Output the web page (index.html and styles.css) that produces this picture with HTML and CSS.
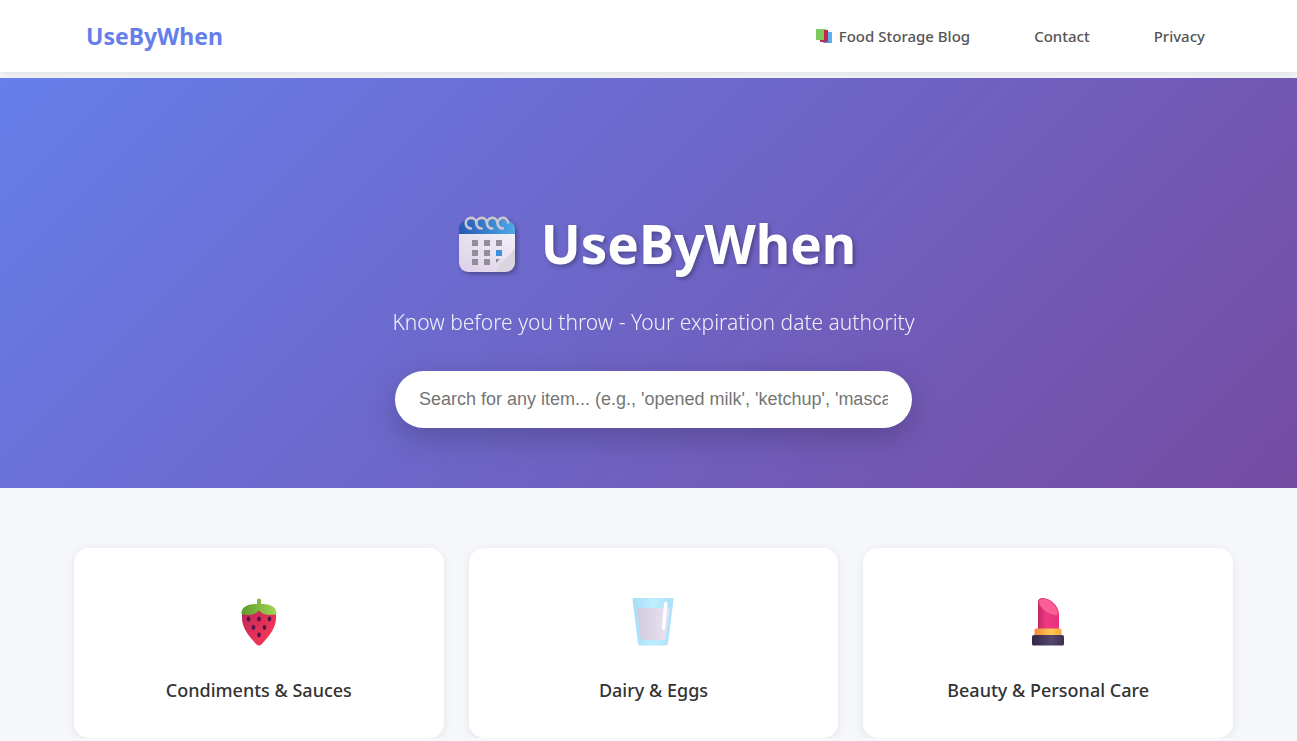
FILE: index.html
```html
<!DOCTYPE html>
<html lang="en">
<head>
    <meta charset="UTF-8">
    <meta name="viewport" content="width=device-width, initial-scale=1.0">
    <title>UseByWhen</title>
    <link rel="stylesheet" href="styles.css">
</head>
<body>
    <header class="header">
        <nav class="nav">
            <a href="#" class="logo">UseByWhen</a>
            <ul class="nav-links">
                <li>
                    <a href="#">
                        <svg class="books-icon" viewBox="0 0 18 16" aria-hidden="true">
                            <rect x="8" y="4" width="9" height="11" rx="1" fill="#4a9be0"/>
                            <rect x="5" y="11" width="7" height="3" fill="#a83464"/>
                            <rect x="1" y="1" width="10" height="11" rx="1" fill="#7cc95c"/>
                            <rect x="9" y="2" width="4" height="11" fill="#c4264e"/>
                            <rect x="13" y="4" width="4" height="10" fill="#5cb1ee"/>
                        </svg>
                        Food Storage Blog
                    </a>
                </li>
                <li><a href="#">Contact</a></li>
                <li><a href="#">Privacy</a></li>
            </ul>
        </nav>
    </header>

    <section class="hero">
        <div class="hero-content">
            <h1>
                <svg class="calendar-icon" viewBox="0 0 56 56" aria-hidden="true">
                    <defs>
                        <linearGradient id="calTop" x1="0" x2="1">
                            <stop offset="0" stop-color="#2558b5"/>
                            <stop offset="1" stop-color="#4fa9e6"/>
                        </linearGradient>
                        <linearGradient id="calPage" x1="0" x2="1" y1="1" y2="0">
                            <stop offset="0" stop-color="#dcd0e6"/>
                            <stop offset="1" stop-color="#f2eff8"/>
                        </linearGradient>
                        <linearGradient id="calFold" x1="0" x2="1" y1="0" y2="1">
                            <stop offset="0" stop-color="#f4f2f8"/>
                            <stop offset="1" stop-color="#bdb8c6"/>
                        </linearGradient>
                    </defs>
                    <path d="M0 18h56v22L40 56H9a9 9 0 0 1-9-9z" fill="url(#calPage)"/>
                    <path d="M37 56l2-6 17-17v14a9 9 0 0 1-9 9z" fill="#d9d5e0"/>
                    <path d="M37 56c2-2 3-5 3-9 6 0 12-5 16-14v4L38 56z" fill="url(#calFold)"/>
                    <path d="M0 18v-5a9 9 0 0 1 9-9h38a9 9 0 0 1 9 9v5z" fill="url(#calTop)"/>
                    <g fill="#918e98">
                        <path d="M13 24h6v6h-6zM25 24h6v6h-6zM37 24h6v6h-6z"/>
                        <path d="M13 34h6v6h-6zM25 34h6v6h-6z"/>
                        <path d="M13 43h6v6h-6zM25 43h6v6h-6zM37 43h4l-4 4z"/>
                    </g>
                    <path d="M37 34h6v6h-6z" fill="#3d8fdc"/>
                    <g fill="none" stroke="#c9c7d2" stroke-width="2.6" stroke-linecap="round">
                        <path d="M12 12.500A5.300 5.300 0 1 1 17.300 6.500"/>
                        <path d="M22.600 12.500A5.300 5.300 0 1 1 27.900 6.500"/>
                        <path d="M33.200 12.500A5.300 5.300 0 1 1 38.500 6.500"/>
                        <path d="M43.800 12.500A5.300 5.300 0 1 1 49.100 6.500"/>
                    </g>
                </svg>
                UseByWhen
            </h1>
            <p class="tagline">Know before you throw - Your expiration date authority</p>
            <input type="text" class="search-box" aria-label="Search for any item" placeholder="Search for any item... (e.g., 'opened milk', 'ketchup', 'mascara')">
        </div>
    </section>

    <main class="categories">
        <a href="#" class="card">
            <svg class="card-icon" viewBox="0 0 48 48" aria-hidden="true">
                <defs>
                    <linearGradient id="berry" x1="0" x2="1" y1="0" y2="1">
                        <stop offset="0" stop-color="#b32557"/>
                        <stop offset=".5" stop-color="#e03058"/>
                        <stop offset="1" stop-color="#ff3b58"/>
                    </linearGradient>
                    <linearGradient id="leaf" x1="0" x2="1">
                        <stop offset="0" stop-color="#5f9a2c"/>
                        <stop offset="1" stop-color="#a4d653"/>
                    </linearGradient>
                </defs>
                <path d="M7 17c0-7 7-9 17-9s17 2 17 9c1 12-6 20-14 29-2 2-4 2-6 0C13 37 6 29 7 17z" fill="url(#berry)"/>
                <path d="M22 1.500q2-2 4 0V7h-4z" fill="#85b944"/>
                <path d="M6.500 16C6 9 13 6 20 6h8c7 0 14 3 13.500 10-5 1.500-12 1-14.500-1l-3-2.500-3 2.500c-2.500 2-9.500 2.500-14.500 1z" fill="url(#leaf)"/>
                <g fill="#52124e">
                    <ellipse cx="13.500" cy="21" rx="1.800" ry="2.400"/>
                    <ellipse cx="24" cy="21" rx="1.800" ry="2.400"/>
                    <ellipse cx="34.500" cy="21" rx="1.800" ry="2.400"/>
                    <ellipse cx="18.500" cy="29.500" rx="1.800" ry="2.400"/>
                    <ellipse cx="29.500" cy="29.500" rx="1.800" ry="2.400"/>
                    <ellipse cx="24" cy="37" rx="1.800" ry="2.400"/>
                </g>
            </svg>
            <h3>Condiments &amp; Sauces</h3>
        </a>
        <a href="#" class="card">
            <svg class="card-icon" viewBox="0 0 48 48" aria-hidden="true">
                <defs>
                    <linearGradient id="glass" x1="0" x2="1">
                        <stop offset="0" stop-color="#a6def8"/>
                        <stop offset=".5" stop-color="#bdeeff"/>
                        <stop offset="1" stop-color="#addff8"/>
                    </linearGradient>
                    <linearGradient id="milk" x1="0" x2="1">
                        <stop offset="0" stop-color="#d0cadc"/>
                        <stop offset="1" stop-color="#ece3f2"/>
                    </linearGradient>
                </defs>
                <path d="M4.500 0h39q1 0 1 1.500L39 45.500q-.5 2-2.500 2h-25q-2 0-2.500-2L3.500 1.500Q3.500 0 4.500 0z" fill="url(#glass)"/>
                <path d="M7.500 10h33L36 42H12z" fill="url(#milk)"/>
                <path d="M35 5q2-2 3.500 0L36 31q-1.500 2-3 0z" fill="#fff"/>
            </svg>
            <h3>Dairy &amp; Eggs</h3>
        </a>
        <a href="#" class="card">
            <svg class="card-icon" viewBox="0 0 48 48" aria-hidden="true">
                <defs>
                    <linearGradient id="stick" x1="0" x2="1">
                        <stop offset="0" stop-color="#c42666"/>
                        <stop offset=".4" stop-color="#ef3a82"/>
                        <stop offset="1" stop-color="#e8307c"/>
                    </linearGradient>
                    <linearGradient id="gold" x1="0" x2="1">
                        <stop offset="0" stop-color="#f4883f"/>
                        <stop offset=".6" stop-color="#ffc653"/>
                        <stop offset="1" stop-color="#f8a63d"/>
                    </linearGradient>
                    <linearGradient id="base" x1="0" x2="1">
                        <stop offset="0" stop-color="#33264a"/>
                        <stop offset=".6" stop-color="#55476c"/>
                        <stop offset="1" stop-color="#3c2f52"/>
                    </linearGradient>
                </defs>
                <path d="M14 31V4q0-4 5-4c8 0 16 9 16 16v15z" fill="url(#stick)"/>
                <path d="M15 4q0-3 4-3c7 0 15 8 15 15q-1 2-4 1C22 15 15 9 15 4z" fill="#fb5f95"/>
                <path d="M10.500 38v-6q0-1.500 2-1.500h23q2 0 2 1.500v6z" fill="url(#gold)"/>
                <path d="M8 46v-7q0-2 2-2h28q2 0 2 2v7q0 1.500-1.500 1.500h-29Q8 47.500 8 46z" fill="url(#base)"/>
            </svg>
            <h3>Beauty &amp; Personal Care</h3>
        </a>
    </main>
</body>
</html>
```
FILE: styles.css
```css
* {
    margin: 0;
    padding: 0;
    box-sizing: border-box;
}

body {
    font-family: "Segoe UI", "Noto Sans", "Open Sans", sans-serif;
    background-color: #f5f7fb;
    color: #333;
}

a {
    text-decoration: none;
}

.header {
    background-color: #fff;
    padding: 0 64px 0 74px;
    box-shadow: 0 2px 10px rgba(0, 0, 0, 0.1);
}

.nav {
    display: flex;
    justify-content: space-between;
    align-items: center;
    max-width: 1160px;
    margin: 0 auto;
    padding: 18px 12px;
}

.logo {
    font-size: 23px;
    line-height: 36px;
    font-weight: 700;
    color: #667eea;
}

.nav-links {
    display: flex;
    gap: 32px;
    list-style: none;
}

.nav-links a {
    display: flex;
    align-items: center;
    gap: 6px;
    padding: 0 16px;
    font-size: 15px;
    line-height: 34px;
    font-weight: 500;
    color: #555;
}

.books-icon {
    width: 18px;
    height: 16px;
}

.hero {
    margin-top: 6px;
    padding: 126px 64px 60px 74px;
    background: linear-gradient(135deg, #667eea 0%, #764ba2 100%);
    color: #fff;
    position: relative;
}

.hero-content {
    display: flex;
    flex-direction: column;
    align-items: center;
    max-width: 517px;
    margin: 0 auto;
}

.hero h1 {
    display: flex;
    align-items: center;
    gap: 26px;
    margin-bottom: 22px;
    font-size: 53px;
    line-height: 80px;
    font-weight: 700;
    text-shadow: 2px 2px 4px rgba(0, 0, 0, 0.3);
}

.calendar-icon {
    width: 56px;
    height: 56px;
    margin-left: 8px;
    filter: drop-shadow(2px 2px 2px rgba(0, 0, 0, 0.3));
}

.tagline {
    margin-bottom: 33px;
    font-size: 21px;
    line-height: 32px;
    font-weight: 300;
    white-space: nowrap;
    opacity: 0.9;
}

.search-box {
    width: 100%;
    height: 57px;
    padding: 0 24px;
    border: none;
    border-radius: 50px;
    outline: none;
    font-family: "Liberation Sans", Arial, sans-serif;
    font-size: 18px;
    box-shadow: 0 10px 30px rgba(0, 0, 0, 0.2);
}

.categories {
    display: grid;
    grid-template-columns: repeat(3, 1fr);
    gap: 25px;
    padding: 60px 64px 0 74px;
}

.card {
    display: flex;
    flex-direction: column;
    align-items: center;
    padding: 50px 30px 34px;
    background-color: #fff;
    border-radius: 15px;
    color: #333;
    box-shadow: 0 2px 10px rgba(0, 0, 0, 0.08);
}

.card-icon {
    width: 48px;
    height: 48px;
    margin-bottom: 30px;
}

.card h3 {
    font-size: 18px;
    line-height: 28px;
    font-weight: 500;
}
```
